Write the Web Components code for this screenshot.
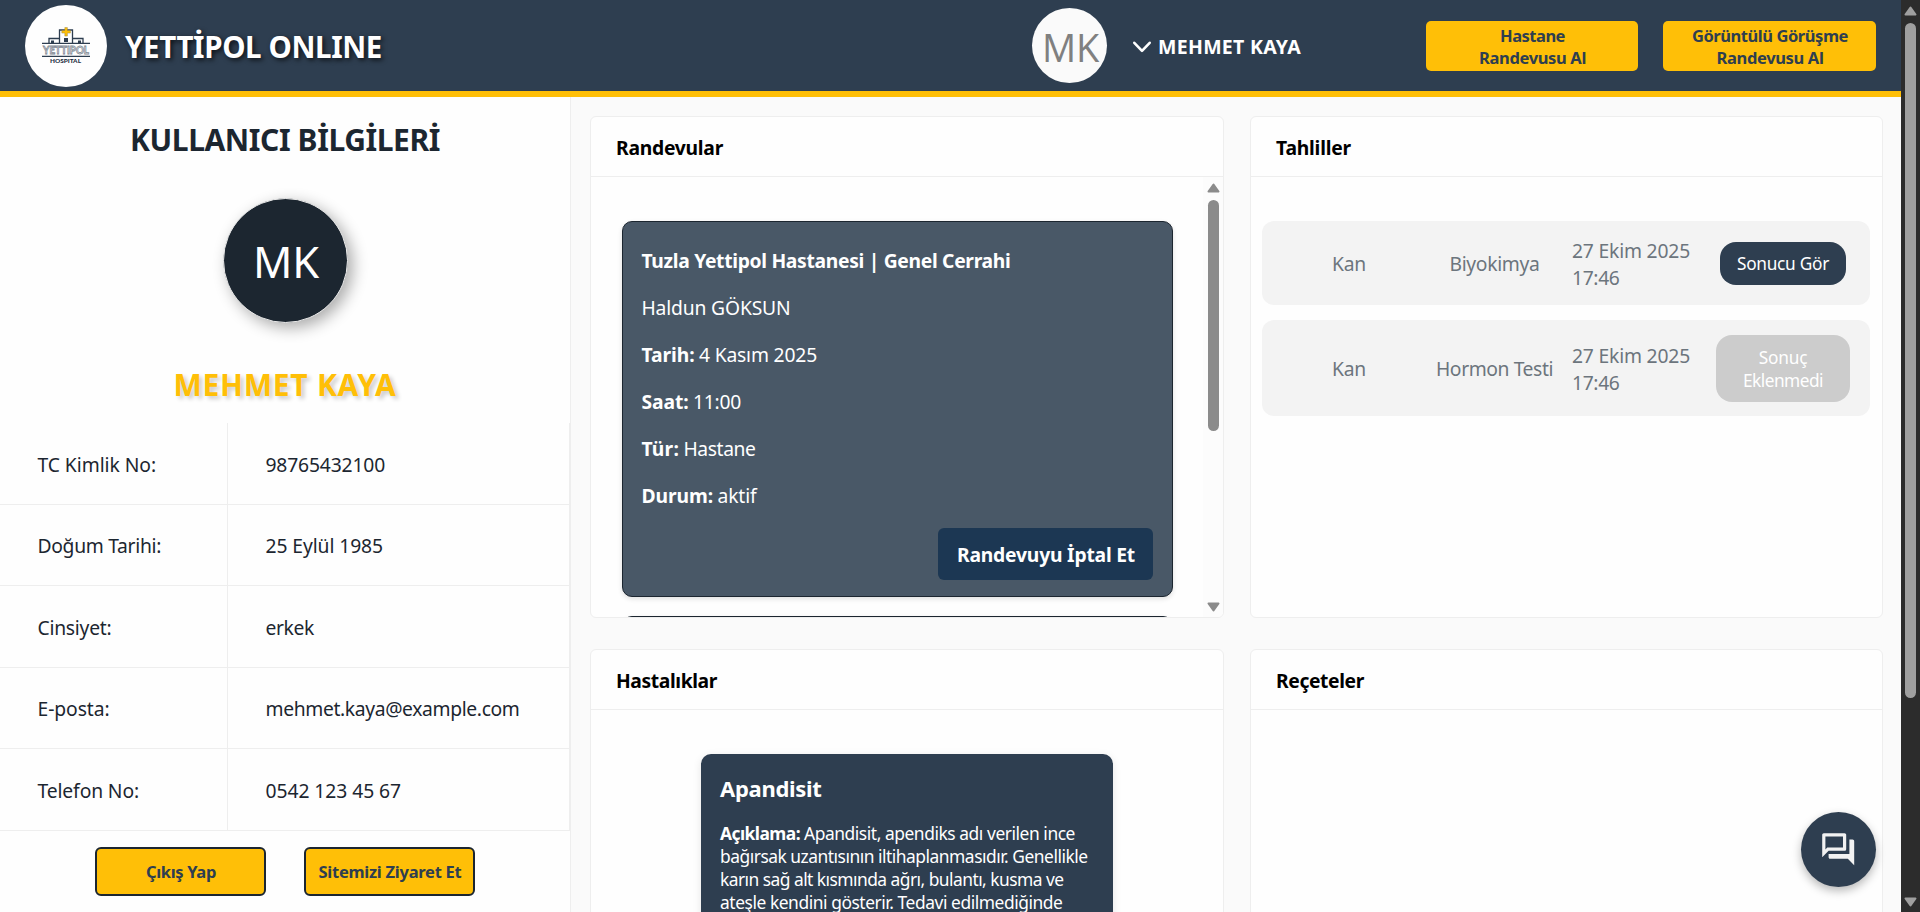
<!DOCTYPE html>
<html lang="tr">
<head>
<meta charset="utf-8">
<title>Yettipol Online</title>
<style>
html,body{margin:0;height:100%;overflow:hidden}
body{font-family:"Noto Sans","Open Sans",sans-serif;font-size:20px;color:#1c2630;background:#fafafa}
</style>
</head>
<body>
<yp-app></yp-app>
<script>
const define = (name, css, html, after) => customElements.define(name, class extends HTMLElement {
  connectedCallback() {
    if (this.shadowRoot) return;
    const root = this.attachShadow({ mode: 'open' });
    root.innerHTML = `<style>*{box-sizing:border-box}${css}</style>${typeof html === 'function' ? html(this) : html}`;
    if (after) after(this, root);
  }
});

/* A line of text tracked to a given width (attribute w, in px). */
define('yp-text', `:host{display:inline-block;white-space:pre}:host([block]){display:block}span{display:inline-block}`,
  `<span><slot></slot></span>`,
  (el, root) => {
    const w = parseFloat(el.getAttribute('w'));
    if (!w) return;
    const span = root.querySelector('span');
    const n = [...el.textContent].length;
    span.style.letterSpacing = ((w - span.getBoundingClientRect().width) / n).toFixed(3) + 'px';
  });

define('yp-logo', `:host{display:block;width:82px;height:82px;border-radius:50%;background:#fefefe}svg{display:block}`,
  `<svg width="82" height="82" viewBox="0 0 82 82" font-family="Lato, sans-serif">
    <g fill="none" stroke="#2e3e50" stroke-width="1.3">
      <path d="M17 38.300H65M17 51.300H65"/>
      <path d="M34.500 38V25H47.500V38M24 38V33.500H34.500M47.500 33.500H58V38"/>
    </g>
    <path d="M26 35.500h3v2.500h-3zM53 35.500h3v2.500h-3zM39 33h4v4h-4z" fill="#2e3e50"/>
    <path d="M39.800 22.500h2.600v3h3v2.600h-3v3h-2.600v-3h-3v-2.600h3z" fill="#fdbf0a" stroke="#8a7a3a" stroke-width=".4"/>
    <text x="41" y="48.500" text-anchor="middle" font-size="10.500" font-weight="700" textLength="46" lengthAdjust="spacingAndGlyphs" fill="#fff" stroke="#7d8792" stroke-width=".8">YETTIPOL</text>
    <text x="40.500" y="57.700" text-anchor="middle" font-size="5.500" font-weight="900" textLength="31" lengthAdjust="spacingAndGlyphs" fill="#1f3044">HOSPITAL</text>
  </svg>`);

define('yp-avatar', `:host{display:flex;align-items:center;justify-content:center;border-radius:50%;flex:none}
  :host([kind=small]){width:75px;height:75px;background:#fafafa;color:#808080;font:400 38px/75px "Open Sans","Noto Sans",sans-serif;padding:3px 0 0 2px;box-sizing:border-box}
  :host([kind=large]){box-sizing:border-box;width:125px;height:125px;border:1px solid #e9e9e9;background:#1c2630;color:#fff;font-size:43.5px;line-height:60px;padding:1px 0 0 2px;box-shadow:5px 5px 15px rgba(0,0,0,.32)}`,
  `<slot></slot>`);

define('yp-cta', `:host{display:flex;flex-direction:column;align-items:center;justify-content:center;height:50px;border-radius:5px;background:#ffbf07;color:#2e3e50;font-weight:700;font-size:16.5px;line-height:22px;padding:2px 0 0 1px;box-sizing:border-box}`,
  `<slot></slot>`);

define('yp-header', `:host{display:flex;height:97px;box-sizing:border-box;background:#2e3e50;border-bottom:6px solid #ffbf07;align-items:flex-start;color:#fff;padding:5px 25px 0}
  h1{margin:21px 0 0 18px;font-size:29.500px;line-height:40px;font-weight:700;text-shadow:2px 2px 5px rgba(0,0,0,.75);width:906px;padding-top:1px}
  yp-avatar{margin:3px 0 0 1px}
  .user{display:flex;align-items:center;height:30px;margin-top:26px;margin-left:25px;width:294px;font-weight:700;font-size:19.500px;gap:6px}
  svg{position:relative;top:1px}
  .b{margin-top:16px;width:212px}.b+.b{margin-left:25px;width:213px}`,
  `<yp-logo></yp-logo><h1><yp-text w="257">YETTİPOL ONLINE</yp-text></h1>
  <yp-avatar kind="small"><yp-text w="57">MK</yp-text></yp-avatar>
  <div class="user"><svg width="20" height="14" viewBox="0 0 20 14" fill="none" stroke="#fff" stroke-width="2.600" stroke-linecap="round" stroke-linejoin="round"><path d="M2.300 2.800L10 10.800L17.700 2.800"/></svg><yp-text w="143">MEHMET KAYA</yp-text></div>
  <yp-cta class="b"><yp-text w="65">Hastane</yp-text><yp-text w="107">Randevusu Al</yp-text></yp-cta>
  <yp-cta class="b"><yp-text w="156">Görüntülü Görüşme</yp-text><yp-text w="107">Randevusu Al</yp-text></yp-cta>`);

define('yp-info-row', `:host{display:grid;grid-template-columns:228px 1fr;height:81.500px;border-bottom:1px solid #eee;box-sizing:border-box;line-height:30px}
  div{display:flex;align-items:center;padding:3px 0 0 37.500px;border-right:1px solid #eee;font-size:19.300px}
  div+div{padding-left:37.500px}`,
  el => `<div><yp-text w="${el.getAttribute('kw')}">${el.getAttribute('key')}</yp-text></div><div><yp-text w="${el.getAttribute('vw')}">${el.getAttribute('value')}</yp-text></div>`);

define('yp-side-button', `:host{display:flex;align-items:center;justify-content:center;box-sizing:border-box;width:171px;height:49px;border:2px solid #1c2630;border-radius:6px;background:#ffbf07;color:#2e3e50;font-weight:700;font-size:16.500px;padding-left:1px}`,
  `<slot></slot>`);

define('yp-sidebar', `:host{display:flex;flex-direction:column;align-items:center;width:571px;box-sizing:border-box;background:#fefefe;border-right:1px solid #eee;flex:none}
  h2{margin:23px 0 0;font-size:30px;line-height:40px;font-weight:700}
  yp-avatar{margin-top:38px}
  h3{margin:42px 0 0;font-size:30px;line-height:40px;font-weight:700;color:#ffbf07;text-shadow:3px 3px 4px rgba(0,0,0,.2)}
  .rows{align-self:stretch;margin-top:18px}
  .buttons{display:flex;gap:38px;margin-top:16px}`,
  `<h2><yp-text w="310">KULLANICI BİLGİLERİ</yp-text></h2>
  <yp-avatar kind="large"><yp-text w="66">MK</yp-text></yp-avatar>
  <h3><yp-text w="223">MEHMET KAYA</yp-text></h3>
  <div class="rows">
    <yp-info-row key="TC Kimlik No:" kw="118.5" value="98765432100" vw="119.5"></yp-info-row>
    <yp-info-row key="Doğum Tarihi:" kw="123.5" value="25 Eylül 1985" vw="117.5"></yp-info-row>
    <yp-info-row key="Cinsiyet:" kw="74" value="erkek" vw="48.5"></yp-info-row>
    <yp-info-row key="E-posta:" kw="72" value="mehmet.kaya@example.com" vw="254"></yp-info-row>
    <yp-info-row key="Telefon No:" kw="101.5" value="0542 123 45 67" vw="135.5"></yp-info-row>
  </div>
  <div class="buttons"><yp-side-button><yp-text w="70">Çıkış Yap</yp-text></yp-side-button><yp-side-button><yp-text w="143">Sitemizi Ziyaret Et</yp-text></yp-side-button></div>`);

define('yp-card', `:host{display:flex;flex-direction:column;box-sizing:border-box;background:#fefefe;border:1px solid #eee;border-radius:6px;overflow:hidden;min-height:0}
  header{height:60px;border-bottom:1px solid #eee;display:flex;align-items:center;padding:2px 0 0 25px;color:#000;font-weight:700;font-size:19.300px;flex:none}
  main{flex:1;min-height:0;overflow:hidden;display:flex}`,
  el => `<header><yp-text w="${el.getAttribute('tw')}">${el.getAttribute('heading')}</yp-text></header><main><slot></slot></main>`);

/* Vertical scrollbar; size, thumb and colours come from custom properties. */
define('yp-scrollbar', `:host{display:flex;flex-direction:column;align-items:center;flex:none;box-sizing:border-box}
  svg{display:block;flex:none}
  .thumb{border-radius:8px;background:var(--fg);width:var(--thumb-w);height:var(--thumb-h)}
  .rest{flex:1}
  path{fill:var(--fg);stroke:var(--fg);stroke-width:2;stroke-linejoin:round}`,
  `<svg width="13" height="10" viewBox="0 0 13 10"><path d="M6.500 1.500L11.500 8.500H1.500Z"/></svg><div style="height:var(--gap)"></div><div class="thumb"></div><div class="rest"></div><svg width="13" height="10" viewBox="0 0 13 10"><path d="M6.500 8.500L11.500 1.500H1.500Z"/></svg>`);

define('yp-appointment', `:host{display:flex;flex-direction:column;box-sizing:border-box;height:376px;border:1px solid #1c2630;border-radius:10px;background:#495867;color:#fff;padding:15px 19px 0 18.500px;font-size:19.300px;box-shadow:0 2px 5px rgba(0,0,0,.12);flex:none}
  p{margin:0;height:47.100px;line-height:47px;display:flex;gap:4.500px}
  b{font-weight:700}
  .btn{align-self:flex-end;width:215px;height:52px;border-radius:6px;background:#1c3753;display:flex;align-items:center;justify-content:center;font-weight:700;margin-top:8px;padding:2px 0 0 1px}`,
  el => el.hasAttribute('next') ? '' : `<p><b><yp-text w="369">Tuzla Yettipol Hastanesi | Genel Cerrahi</yp-text></b></p>
  <p><yp-text w="149">Haldun GÖKSUN</yp-text></p>
  <p><b><yp-text w="53">Tarih:</yp-text></b><yp-text w="118">4 Kasım 2025</yp-text></p>
  <p><b><yp-text w="47">Saat:</yp-text></b><yp-text w="48">11:00</yp-text></p>
  <p><b><yp-text w="37.500">Tür:</yp-text></b><yp-text w="72">Hastane</yp-text></p>
  <p><b><yp-text w="71.500">Durum:</yp-text></b><yp-text w="39">aktif</yp-text></p>
  <div class="btn"><yp-text w="178">Randevuyu İptal Et</yp-text></div>`);

define('yp-appointments', `:host{display:flex;flex:1;min-width:0}
  .list{flex:1;overflow:hidden;padding:44px 30px 0 31px;display:flex;flex-direction:column;gap:19px}
  yp-scrollbar{width:20px;background:#fcfcfc;padding:6px 0 5px 1px;--fg:#8b8b8b;--gap:7px;--thumb-w:11px;--thumb-h:231px}`,
  `<div class="list"><yp-appointment></yp-appointment><yp-appointment next></yp-appointment></div><yp-scrollbar></yp-scrollbar>`);

define('yp-test', `:host{display:grid;grid-template-columns:174px 117px 136px 1fr;align-items:center;box-sizing:border-box;border-radius:12px;background:#f3f3f3;color:#6c757d;font-size:19.300px;line-height:27px;padding-right:19px;flex:none}
  .c{text-align:center;padding-top:1px}
  .d{padding:2px 0 0 19px}
  .btn{justify-self:end;margin-right:5px;background:#2e3e50;color:#fff;border-radius:16px;width:126px;height:43px;font-size:17.300px;line-height:23px;display:flex;flex-direction:column;align-items:center;justify-content:center;padding-top:1px}
  :host([pending]) .btn{background:#ccc;width:134px;height:67px;margin-right:1px}`,
  el => `<div class="c"><yp-text w="34">Kan</yp-text></div><div class="c"><yp-text w="${el.getAttribute('nw')}">${el.getAttribute('name')}</yp-text></div>
  <div class="d"><yp-text block w="118">27 Ekim 2025</yp-text><yp-text block w="47.500">17:46</yp-text></div>
  <div class="btn">${el.hasAttribute('pending') ? '<yp-text w="48.500">Sonuç</yp-text><yp-text w="80">Eklenmedi</yp-text>' : '<yp-text w="92">Sonucu Gör</yp-text>'}</div>`);

define('yp-tests', `:host{display:flex;flex-direction:column;flex:1;padding:44px 12px 0 11px;gap:15px}
  yp-test{height:84px}yp-test[pending]{height:96px}`,
  `<yp-test name="Biyokimya" nw="90"></yp-test><yp-test name="Hormon Testi" nw="117" pending></yp-test>`);

define('yp-disease', `:host{display:block;width:412px;margin:44px auto 0;box-sizing:border-box;height:400px;background:#2e3e50;border-radius:10px;color:#fff;padding:18px 19px;font-size:17.400px;line-height:23px;box-shadow:0 2px 8px rgba(0,0,0,.1)}
  h3{margin:0 0 18px;font-size:22px;line-height:32px;font-weight:700}
  .l{display:flex;gap:4px}`,
  `<h3><yp-text w="101.500">Apandisit</yp-text></h3>
  <div class="l"><b><yp-text w="80">Açıklama:</yp-text></b><yp-text w="271">Apandisit, apendiks adı verilen ince</yp-text></div>
  <yp-text block w="367.500">bağırsak uzantısının iltihaplanmasıdır. Genellikle</yp-text>
  <yp-text block w="343.500">karın sağ alt kısmında ağrı, bulantı, kusma ve</yp-text>
  <yp-text block w="342.500">ateşle kendini gösterir. Tedavi edilmediğinde</yp-text>`);

define('yp-chat-button', `:host{position:absolute;left:1801px;top:812px;width:75px;height:75px;border-radius:50%;background:#2e3e50;display:flex;align-items:center;justify-content:center;box-shadow:0 4px 10px rgba(0,0,0,.28)}`,
  `<svg width="38.400" height="38.400" viewBox="0 0 24 24" fill="#f2f2f2"><path d="M15 4v7H5.170L4 12.170V4h11m1-2H3c-.55 0-1 .45-1 1v14l4-4h10c.55 0 1-.45 1-1V3c0-.55-.45-1-1-1zm5 4h-2v9H6v2c0 .55.45 1 1 1h11l4 4V7c0-.55-.45-1-1-1z"/></svg>`);

define('yp-app', `:host{display:flex;width:1920px;height:912px;overflow:hidden;position:relative}
  .page{flex:1;display:flex;flex-direction:column;min-width:0}
  .body{flex:1;display:flex;min-height:0}
  .grid{flex:1;display:grid;grid-template-columns:634px 633px;grid-template-rows:502px 502px;column-gap:26px;row-gap:31px;padding:19px 0 0 19px;background:#fafafa;overflow:hidden}
  .sb{width:19px;background:#2c2c2c;padding:6px 0 5px;--fg:#9f9f9f;--gap:7px;--thumb-w:11px;--thumb-h:675px}`,
  `<div class="page"><yp-header></yp-header><div class="body"><yp-sidebar></yp-sidebar>
    <div class="grid">
      <yp-card heading="Randevular" tw="107"><yp-appointments></yp-appointments></yp-card>
      <yp-card heading="Tahliller" tw="75"><yp-tests></yp-tests></yp-card>
      <yp-card heading="Hastalıklar" tw="101"><yp-disease></yp-disease></yp-card>
      <yp-card heading="Reçeteler" tw="88"></yp-card>
    </div></div></div>
  <yp-scrollbar class="sb"></yp-scrollbar>
  <yp-chat-button></yp-chat-button>`);
</script>
</body>
</html>
